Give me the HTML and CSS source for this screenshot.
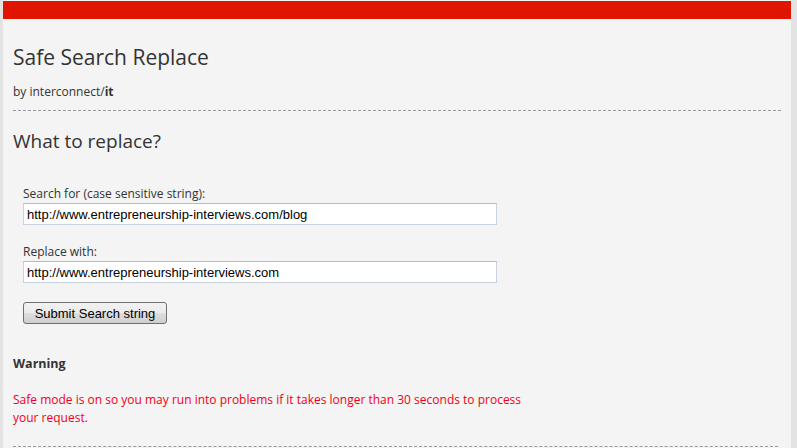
FILE: index.html
```html
<!DOCTYPE html>
<html lang="en">
<head>
    <meta charset="UTF-8">
    <title>Safe Search Replace</title>
    <link rel="stylesheet" href="styles.css">
</head>
<body>
    <div class="wrap">
        <div class="topbar"></div>
        <div class="content">
            <h1>Safe Search Replace</h1>
            <p class="byline">by interconnect/<strong>it</strong></p>
            <hr class="sep">

            <h2>What to replace?</h2>
            <form class="replace-form">
                <label for="srch">Search for (case sensitive string):</label>
                <input type="text" id="srch" value="http://www.entrepreneurship-interviews.com/blog">

                <label for="rplc" class="second">Replace with:</label>
                <input type="text" id="rplc" value="http://www.entrepreneurship-interviews.com">

                <div><button type="submit" class="submit-btn">Submit Search string</button></div>
            </form>

            <h3 class="warn-title">Warning</h3>
            <p class="warn-text">Safe mode is on so you may run into problems if it takes longer than 30 seconds to process your request.</p>
            <hr class="sep sep-bottom">
        </div>
    </div>
</body>
</html>
```

FILE: styles.css
```css
body {
    margin: 0;
    padding: 0;
    background-color: #e3e3e3;
    font-family: "Open Sans", "Noto Sans", sans-serif;
    color: #333;
    height: 448px;
    overflow: hidden;
}

.wrap {
    margin-left: 3px;
    width: 788px;
    background-color: #f4f4f4;
    min-height: 448px;
    padding-top: 1px;
}

.topbar {
    height: 18px;
    background-color: #e01500;
}

.content {
    padding: 0 10px;
}

h1 {
    font-size: 21px;
    font-weight: normal;
    line-height: 30px;
    margin: 23px 0 0;
}

.byline {
    font-size: 12px;
    line-height: 18px;
    margin: 11px 0 0;
}

.sep {
    border: 0;
    border-top: 1px dashed #9a9a9a;
    margin: 9px 0 0;
    height: 0;
}

h2 {
    font-size: 19px;
    font-weight: normal;
    line-height: 26px;
    margin: 17px 0 0;
}

.replace-form {
    display: flex;
    flex-direction: column;
    align-items: flex-start;
    padding-left: 10px;
    margin-top: 32px;
}

.replace-form label {
    font-size: 12px;
    line-height: 16px;
    margin-bottom: 1px;
}

.replace-form label.second {
    margin-top: 19px;
}

.replace-form input {
    box-sizing: border-box;
    width: 474px;
    height: 22px;
    margin: 0;
    padding: 0 3px;
    border: 1px solid #c9d1dc;
    border-top-color: #b4bcc8;
    background: #fff;
    font-family: "Liberation Sans", Arial, sans-serif;
    font-size: 13px;
    color: #000;
}

.submit-btn {
    margin-top: 19px;
    box-sizing: border-box;
    width: 144px;
    height: 22px;
    padding: 0;
    border: 1px solid #707070;
    border-radius: 3px;
    background: linear-gradient(#f2f2f2 0%, #ebebeb 50%, #dddddd 51%, #cfcfcf 100%);
    font-family: "Liberation Sans", Arial, sans-serif;
    font-size: 13px;
    color: #000;
}

.warn-title {
    font-size: 12.5px;
    font-weight: bold;
    line-height: 18px;
    margin: 31px 0 0;
}

.warn-text {
    color: #f00014;
    font-size: 12px;
    line-height: 18px;
    margin: 18px 0 0;
    max-width: 520px;
}

.sep-bottom {
    margin-top: 19px;
    margin-right: 3px;
}
```
